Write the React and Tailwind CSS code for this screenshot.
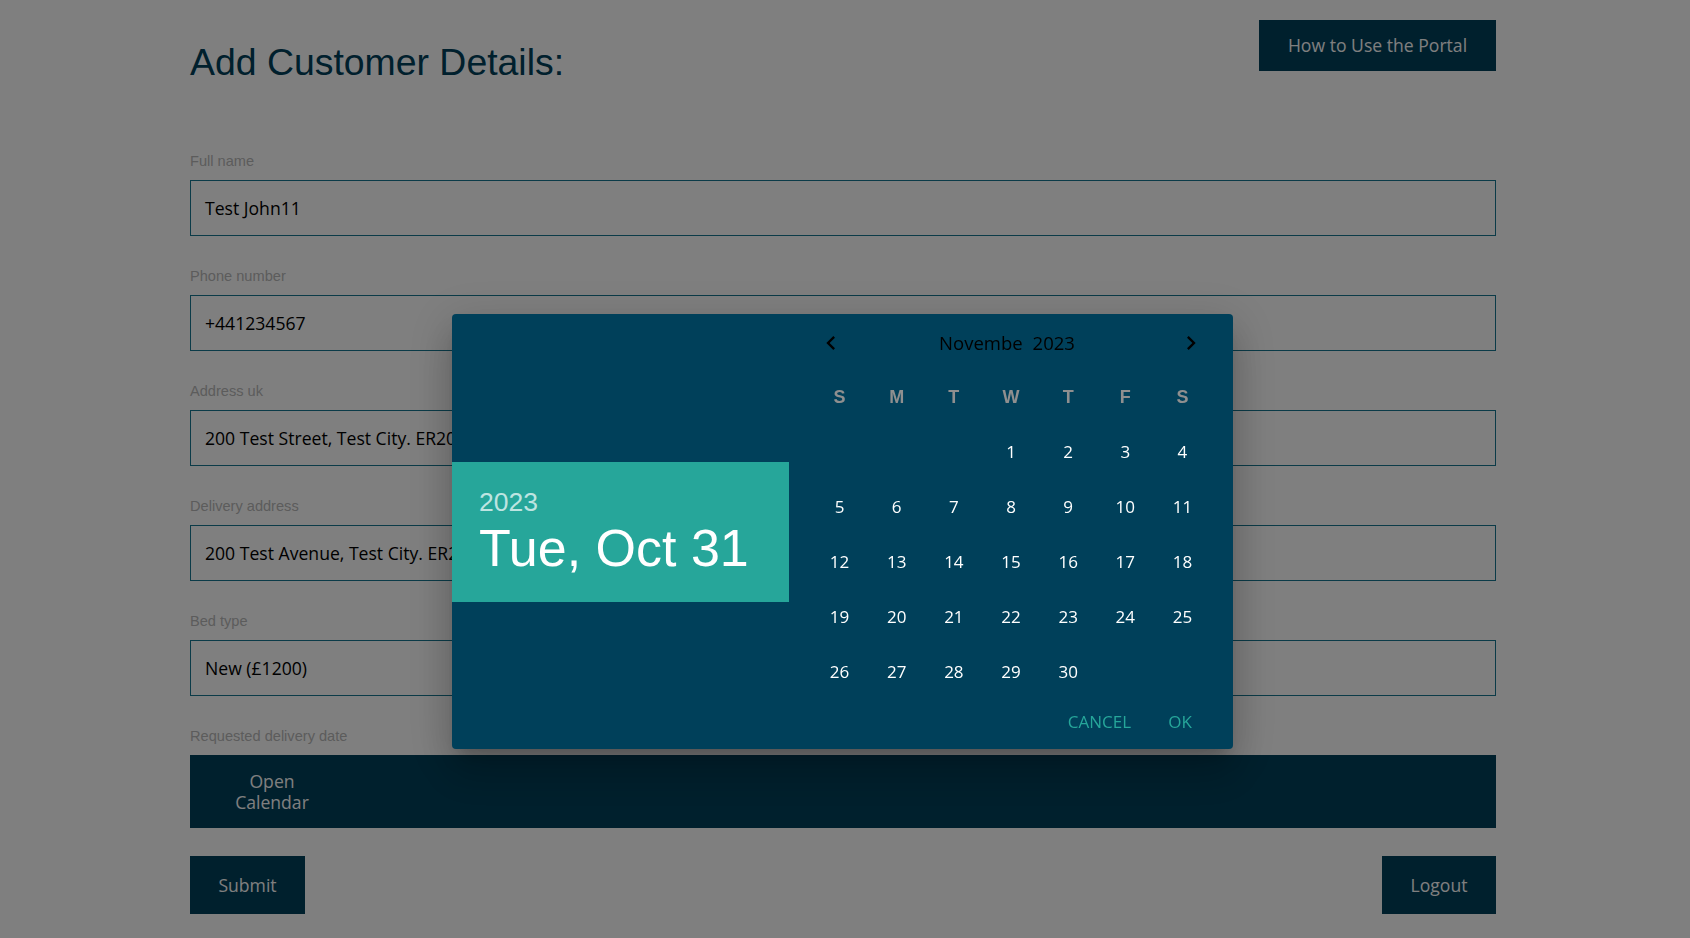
import { useState } from 'react';

const sans = { fontFamily: '"Open Sans", "Noto Sans", sans-serif' };
const arial = { fontFamily: '"Liberation Sans", Arial, sans-serif' };

const fields = [
  { label: 'Full name', value: 'Test John11' },
  { label: 'Phone number', value: '+441234567' },
  { label: 'Address uk', value: '200 Test Street, Test City. ER20 1AB' },
  { label: 'Delivery address', value: '200 Test Avenue, Test City. ER20 1AB' },
  { label: 'Bed type', value: 'New (£1200)' },
];

const weekDays = ['S', 'M', 'T', 'W', 'T', 'F', 'S'];

// November 2023 starts on a Wednesday
const buildWeeks = () => {
  const cells = [null, null, null];
  for (let d = 1; d <= 30; d++) cells.push(d);
  while (cells.length % 7 !== 0) cells.push(null);
  const weeks = [];
  for (let i = 0; i < cells.length; i += 7) weeks.push(cells.slice(i, i + 7));
  return weeks;
};

const ChevronLeft = () => (
  <svg width="28" height="28" viewBox="0 0 24 24" fill="#000">
    <path d="M15.41 16.59L10.83 12l4.58-4.59L14 6l-6 6 6 6 1.41-1.41z" />
  </svg>
);

const ChevronRight = () => (
  <svg width="28" height="28" viewBox="0 0 24 24" fill="#000">
    <path d="M8.59 16.59L13.17 12 8.59 7.41 10 6l6 6-6 6-1.41-1.41z" />
  </svg>
);

const Field = ({ label, value }) => (
  <div className="flex flex-col">
    <label className="text-[14.6px] leading-[20px] text-[#b8b8b8] mb-[9px]" style={arial}>
      {label}
    </label>
    <div className="h-[56px] border-[1.5px] border-[#167690] flex items-center px-[14px] overflow-hidden">
      <span className="text-[17.6px] text-black whitespace-nowrap" style={sans}>
        {value}
      </span>
    </div>
  </div>
);

const DatePickerDialog = () => {
  const weeks = buildWeeks();
  return (
    <div className="fixed inset-0 z-20 flex items-start pl-[452px] pt-[314px]">
      <div className="w-[781px] h-[435px] bg-[#00405a] rounded-[4px] flex overflow-hidden shadow-[0px_11px_15px_-7px_rgba(0,0,0,0.2),0px_24px_38px_3px_rgba(0,0,0,0.14),0px_9px_46px_8px_rgba(0,0,0,0.12)]">
        {/* toolbar */}
        <div className="w-[337px] flex items-center">
          <div className="w-full h-[140px] bg-[#26a69a] flex flex-col justify-center px-[27px]" style={arial}>
            <div className="text-[26.5px] leading-[32px] text-[#bee4e1]">2023</div>
            <div className="text-[52px] leading-[57px] text-white mt-[2px]">Tue, Oct 31</div>
          </div>
        </div>

        {/* calendar */}
        <div className="flex-1 flex flex-col px-[22px]">
          <div className="h-[57px] flex items-center justify-between">
            <button className="w-[40px] h-[40px] flex items-center justify-center">
              <ChevronLeft />
            </button>
            <div className="text-[18.5px] text-black flex gap-[10px] -ml-[8px]" style={sans}>
              <span>Novembe</span>
              <span>2023</span>
            </div>
            <button className="w-[40px] h-[40px] flex items-center justify-center">
              <ChevronRight />
            </button>
          </div>

          <div className="grid grid-cols-7 w-[400px] h-[53px] items-center">
            {weekDays.map((d, i) => (
              <div key={i} className="text-center text-[18px] font-bold text-[#8f8f8f]" style={arial}>
                {d}
              </div>
            ))}
          </div>

          <div className="flex flex-col w-[400px]">
            {weeks.map((week, wi) => (
              <div key={wi} className="grid grid-cols-7 h-[55px] items-center">
                {week.map((d, di) => (
                  <div key={di} className="text-center text-[17px] text-white" style={sans}>
                    {d ?? ''}
                  </div>
                ))}
              </div>
            ))}
          </div>

          <div className="h-[46px] flex items-center justify-end gap-[9px] -mr-[1px]" style={sans}>
            <button className="w-[79px] h-[36px] text-[17px] text-[#26a69a]">CANCEL</button>
            <button className="w-[64px] h-[36px] text-[17px] text-[#26a69a]">OK</button>
          </div>
        </div>
      </div>
    </div>
  );
};

export default function App() {
  const [open] = useState(true);

  return (
    <div className="h-screen overflow-hidden bg-white relative">
      <div className="w-[1306px] ml-[190px] pt-[20px]">
        <div className="flex justify-between items-start">
          <h1 className="text-[37.4px] leading-[44px] text-[#00405a] mt-[20px]" style={arial}>
            Add Customer Details:
          </h1>
          <button
            className="w-[237px] h-[51px] bg-[#00405a] text-white text-[17.6px]"
            style={sans}
          >
            How to Use the Portal
          </button>
        </div>

        <div className="mt-[67px] flex flex-col gap-[30px]">
          {fields.map((f) => (
            <Field key={f.label} label={f.label} value={f.value} />
          ))}

          <div className="flex flex-col">
            <label className="text-[14.6px] leading-[20px] text-[#b8b8b8] mb-[9px]" style={arial}>
              Requested delivery date
            </label>
            <div className="h-[73px] bg-[#00405a] flex items-center">
              <button
                className="ml-[32px] w-[100px] text-center text-[17.6px] leading-[21px] text-white"
                style={sans}
              >
                Open Calendar
              </button>
            </div>
          </div>
        </div>

        <div className="mt-[28px] flex justify-between">
          <button className="w-[115px] h-[58px] bg-[#00405a] text-white text-[17.6px]" style={sans}>
            Submit
          </button>
          <button className="w-[114px] h-[58px] bg-[#00405a] text-white text-[17.6px]" style={sans}>
            Logout
          </button>
        </div>
      </div>

      {open && (
        <>
          <div className="fixed inset-0 z-10 bg-black/50" />
          <DatePickerDialog />
        </>
      )}
    </div>
  );
}
